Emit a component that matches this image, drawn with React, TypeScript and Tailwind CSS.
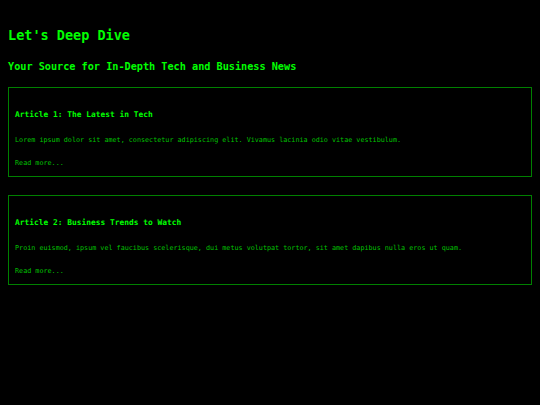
const articles = [
  {
    title: "Article 1: The Latest in Tech",
    body: "Lorem ipsum dolor sit amet, consectetur adipiscing elit. Vivamus lacinia odio vitae vestibulum.",
  },
  {
    title: "Article 2: Business Trends to Watch",
    body: "Proin euismod, ipsum vel faucibus scelerisque, dui metus volutpat tortor, sit amet dapibus nulla eros ut quam.",
  },
];

export default function App() {
  return (
    <div className="min-h-[405px] w-[540px] bg-black p-2 font-['DejaVu_Sans_Mono',monospace] text-[#00ff00]">
      <h1 className="mt-[19px] h-4 text-[13.5px] font-bold leading-4">Let's Deep Dive</h1>
      <p className="mt-[18px] h-3 text-[10.2px] font-bold leading-3">
        Your Source for In-Depth Tech and Business News
      </p>
      <div className="mt-[14px] flex flex-col gap-[18px]">
        {articles.map((a) => (
          <div key={a.title} className="border border-[#008000] px-[6px] pt-[22px] pb-[8px]">
            <h2 className="h-[10px] text-[7.9px] font-bold leading-[10px]">{a.title}</h2>
            <p className="mt-[16px] h-[9px] text-[6.75px] leading-[9px] text-[#00c000]">{a.body}</p>
            <p className="mt-[14px] h-[9px] text-[6.75px] leading-[9px] text-[#00c000]">Read more...</p>
          </div>
        ))}
      </div>
    </div>
  );
}
